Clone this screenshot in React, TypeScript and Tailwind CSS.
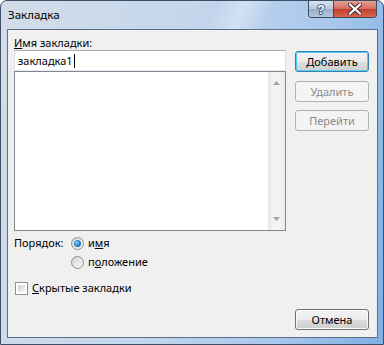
import React from "react";

const font = { fontFamily: '"Noto Sans", "Liberation Sans", sans-serif' };

const Btn = ({ children, disabled, def }: { children: React.ReactNode; disabled?: boolean; def?: boolean }) => {
    if (disabled) {
        return (
            <div className="w-[74px] h-[21px] rounded-[3px] border border-[#adb2b5] bg-[#f4f4f4] flex items-center justify-center text-[#8b8b8b] text-[11px] leading-none">
                {children}
            </div>
        );
    }
    return (
        <div className={"w-[74px] h-[21px] rounded-[3px] border flex items-center justify-center text-black text-[11px] leading-none bg-[linear-gradient(#f3f3f3_0%,#ebebeb_50%,#dddddd_51%,#cfcfcf_100%)] " + (def ? "border-[#3c7fb1] shadow-[inset_0_0_0_1px_#52cdf4]" : "border-[#707070] shadow-[inset_0_0_0_1px_#fbfbfb]")}>
            {children}
        </div>
    );
};

const Radio = ({ checked }: { checked?: boolean }) => (
    <div className="w-[13px] h-[13px] rounded-full border border-[#8e8f8f] bg-[linear-gradient(135deg,#d6d6d6,#f8f8f8)] flex items-center justify-center">
        {checked && (
            <div className="w-[7px] h-[7px] rounded-full bg-[radial-gradient(circle_at_40%_40%,#9ad8fb_0%,#2a8bcd_45%,#174e82_100%)]" />
        )}
    </div>
);

export default function App() {
    return (
        <div style={font} className="w-[384px] h-[345px] overflow-hidden rounded-t-[7px] border border-[#3d4f66] bg-[linear-gradient(100deg,#d3dde8_0%,#c3d6ec_45%,#a9c8ec_75%,#7fb0e4_100%)] flex flex-col pl-[6px] pr-[5px] pb-[6px]">
            {/* title bar */}
            <div className="h-[28px] flex items-start justify-between bg-[linear-gradient(115deg,transparent_0%,transparent_55%,rgba(255,255,255,0.35)_62%,transparent_70%)]">
                <span className="ml-[1px] mt-[6px] text-[11.5px] leading-[16px] text-black">Закладка</span>
                <div className="flex mr-[1px] -mt-[1px] h-[18px] rounded-b-[4px] border border-t-0 border-[#3d4a5c] overflow-hidden">
                    <div className="w-[25px] h-full border-r border-[#3d4a5c] bg-[linear-gradient(#dce6f2_0%,#b9cadf_50%,#98aec8_51%,#b3c7de_100%)] flex items-center justify-center">
                        <svg width="10" height="13" viewBox="0 0 10 13">
                            <text x="5" y="11.5" textAnchor="middle" fontSize="13" fontWeight="bold" fontFamily="Liberation Sans, sans-serif" fill="#fff" stroke="#3e4a5a" strokeWidth="1.6" paintOrder="stroke">?</text>
                        </svg>
                    </div>
                    <div className="w-[42px] h-full bg-[linear-gradient(#e8a398_0%,#d66f62_50%,#c13a2f_51%,#d8664a_100%)] flex items-center justify-center">
                        <svg width="14" height="12" viewBox="0 0 14 12">
                            <path d="M2 1.5 L12 10.5 M12 1.5 L2 10.5" stroke="#3e2a2a" strokeWidth="4.2" strokeLinecap="square" />
                            <path d="M2 1.5 L12 10.5 M12 1.5 L2 10.5" stroke="#ffffff" strokeWidth="2.2" strokeLinecap="square" />
                        </svg>
                    </div>
                </div>
            </div>

            {/* client area */}
            <div className="flex-1 border border-[#5c6f89] bg-[#f0f0f0] flex text-black text-[11px]">
                <div className="ml-[6px] w-[272px] flex flex-col">
                    <div className="mt-[6px] h-[14px] leading-[14px]"><span className="underline">И</span>мя закладки:</div>
                    <div className="h-[21px] border border-[#abadb3] border-l-[#e2e3ea] border-r-[#dbdfe6] border-b-[#e3e9ef] bg-white flex items-center pl-[3px] leading-none">
                        закладка1<span className="ml-[1px] w-[1px] h-[14px] bg-black" />
                    </div>
                    <div className="h-[160px] border border-[#828790] bg-white flex justify-end">
                        <div className="w-[17px] h-full bg-[linear-gradient(90deg,#e6e6e6,#f4f4f4_30%,#f4f4f4_70%,#ebebeb)] flex flex-col items-center justify-between py-[9px]">
                            <svg width="7" height="4" viewBox="0 0 7 4"><path d="M0 4 L3.5 0 L7 4 Z" fill="#a6a6a6" /></svg>
                            <svg width="7" height="4" viewBox="0 0 7 4"><path d="M0 0 L7 0 L3.5 4 Z" fill="#a6a6a6" /></svg>
                        </div>
                    </div>
                    <div className="mt-[3px] h-[19px] flex items-center">
                        <span className="w-[57px]">Порядок:</span>
                        <Radio checked />
                        <span className="ml-[4px]">и<span className="underline">м</span>я</span>
                    </div>
                    <div className="h-[19px] flex items-center pl-[57px]">
                        <Radio />
                        <span className="ml-[4px]">п<span className="underline">о</span>ложение</span>
                    </div>
                    <div className="mt-[8px] h-[16px] flex items-center pl-[1px]">
                        <div className="w-[13px] h-[13px] border border-[#8f8f8f] bg-white p-[2px]">
                            <div className="w-full h-full bg-[linear-gradient(135deg,#cbcfd5,#f6f6f6)]" />
                        </div>
                        <span className="ml-[4px]"><span className="underline">С</span>крытые закладки</span>
                    </div>
                </div>

                <div className="ml-[9px] mt-[21px] mb-[7px] flex flex-col">
                    <Btn def><span><span className="underline">Д</span>обавить</span></Btn>
                    <div className="mt-[9px]"><Btn disabled>Удалить</Btn></div>
                    <div className="mt-[8px]"><Btn disabled>Перейти</Btn></div>
                    <div className="mt-auto"><Btn>Отмена</Btn></div>
                </div>
            </div>
        </div>
    );
}
